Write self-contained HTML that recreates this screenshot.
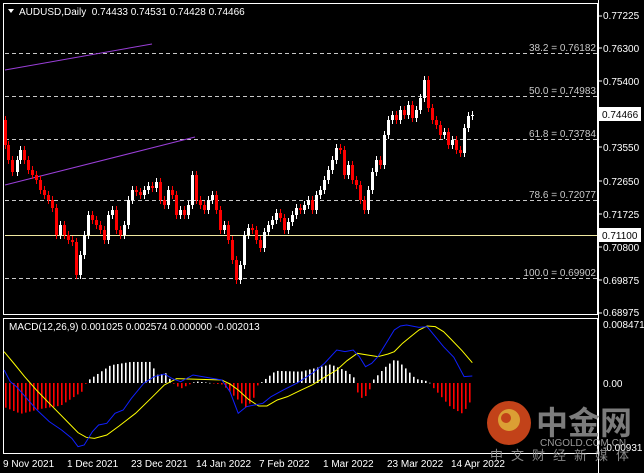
<!DOCTYPE html>
<html><head><meta charset="utf-8"><style>
html,body{margin:0;padding:0;background:#000;width:644px;height:473px;overflow:hidden}
svg{display:block}
text{font-family:"Liberation Sans",sans-serif;font-size:10px;fill:#fff}
</style></head><body>
<svg id="s" width="644" height="473" viewBox="0 0 644 473" xmlns="http://www.w3.org/2000/svg">
<rect width="644" height="473" fill="#000"/>
<rect x="3.5" y="3.5" width="594" height="311" fill="none" stroke="#fff"/>
<rect x="3.5" y="318.5" width="594" height="135" fill="none" stroke="#fff"/>
<line x1="598.5" y1="0" x2="598.5" y2="473" stroke="#fff"/>
<g stroke="#c8c8c8" stroke-dasharray="4,3" stroke-width="1">
<line x1="5" y1="53.5" x2="597" y2="53.5"/>
<line x1="5" y1="96.5" x2="597" y2="96.5"/>
<line x1="5" y1="139.5" x2="597" y2="139.5"/>
<line x1="5" y1="200.5" x2="597" y2="200.5"/>
<line x1="5" y1="278.5" x2="597" y2="278.5"/>
</g>
<g text-anchor="end">
<text x="596" y="51" style="fill:#c8c8c8">38.2 = 0.76182</text>
<text x="596" y="94" style="fill:#c8c8c8">50.0 = 0.74983</text>
<text x="596" y="137" style="fill:#c8c8c8">61.8 = 0.73784</text>
<text x="596" y="198" style="fill:#c8c8c8">78.6 = 0.72077</text>
<text x="596" y="276" style="fill:#c8c8c8">100.0 = 0.69902</text>
</g>
<line x1="5" y1="235.5" x2="597" y2="235.5" stroke="#f0e8a0"/>
<line x1="5" y1="70" x2="152" y2="44" stroke="#9a3fd8"/>
<line x1="5" y1="185" x2="195" y2="137" stroke="#9a3fd8"/>
<g id="candles"></g>
<g id="hist"></g>
<g transform="translate(0,300) scale(0.4107,0.3333)" fill="none">
<polyline vector-effect="non-scaling-stroke" stroke="#ffff00" stroke-width="1" points="10,155 35,192 60,230 90,272 120,310 160,360 190,398 210,412 230,415 260,405 290,378 330,340 370,292 400,255 430,236 540,240 560,252 580,270 605,298 630,318 650,318 675,300 700,290 730,272 760,255 790,232 820,210 845,182 870,160 895,165 920,170 945,162 960,155 980,130 1000,110 1020,90 1040,78 1060,80 1080,95 1100,120 1125,152 1150,188"/>
<polyline vector-effect="non-scaling-stroke" stroke="#1020ff" stroke-width="1" points="10,210 25,245 40,260 65,295 90,330 120,365 150,390 175,415 190,440 205,435 225,395 240,375 260,370 280,340 300,330 320,295 350,250 375,230 400,222 420,236 440,245 470,225 540,240 560,275 580,340 600,320 640,310 660,290 690,270 725,248 760,220 790,190 820,150 840,155 860,150 875,170 890,200 905,190 920,170 940,130 960,90 975,78 990,75 1020,82 1040,80 1060,110 1080,140 1105,172 1130,230 1150,228"/>
</g>
<polygon points="8,9 14,9 11,13" fill="#fff"/>
<text x="19" y="15">AUDUSD,Daily&#160; 0.74433 0.74531 0.74428 0.74466</text>
<text x="9" y="330">MACD(12,26,9) 0.001025 0.002574 0.000000 -0.002013</text>
<g>
<line x1="598" y1="16" x2="602" y2="16" stroke="#fff"/><text x="603" y="19">0.77225</text>
<line x1="598" y1="48" x2="602" y2="48" stroke="#fff"/><text x="603" y="52">0.76300</text>
<line x1="598" y1="81" x2="602" y2="81" stroke="#fff"/><text x="603" y="85">0.75400</text>
<line x1="598" y1="147" x2="602" y2="147" stroke="#fff"/><text x="603" y="151">0.73550</text>
<line x1="598" y1="181" x2="602" y2="181" stroke="#fff"/><text x="603" y="185">0.72650</text>
<line x1="598" y1="214" x2="602" y2="214" stroke="#fff"/><text x="603" y="218">0.71725</text>
<line x1="598" y1="247" x2="602" y2="247" stroke="#fff"/><text x="603" y="251">0.70800</text>
<line x1="598" y1="280" x2="602" y2="280" stroke="#fff"/><text x="603" y="284">0.69875</text>
<line x1="598" y1="313" x2="602" y2="313" stroke="#fff"/><text x="603" y="316">0.68975</text>
<rect x="599" y="107" width="42" height="14" fill="#fff"/><text x="602" y="118" style="fill:#000">0.74466</text>
<rect x="599" y="228" width="42" height="14" fill="#fff"/><text x="602" y="239" style="fill:#000">0.71100</text>
<text x="603" y="328">0.008471</text>
<text x="603" y="387">0.00</text>
<text x="603" y="451">-0.00931</text>
</g>
<g>
<text x="3" y="467">9 Nov 2021</text>
<text x="67" y="467">1 Dec 2021</text>
<text x="131" y="467">23 Dec 2021</text>
<text x="196" y="467">14 Jan 2022</text>
<text x="259" y="467">7 Feb 2022</text>
<text x="323" y="467">1 Mar 2022</text>
<text x="387" y="467">23 Mar 2022</text>
<text x="451" y="467">14 Apr 2022</text>
</g>
<g opacity="0.9">
<circle cx="509" cy="423" r="22" fill="#d84a1c"/>
<circle cx="509" cy="420" r="11" fill="#f3b13a"/>
<circle cx="506" cy="418" r="5" fill="#d84a1c"/>
<text x="536" y="434" style="font-family:'Noto Sans CJK SC',sans-serif;font-size:32px;font-weight:bold;fill:#8a8a8a">中金网</text>
<text x="540" y="446" style="font-size:10px;fill:#aaa">CNGOLD.COM.CN</text>
<text x="490" y="460" style="font-family:'Noto Sans CJK SC',sans-serif;font-size:13px;fill:#999;letter-spacing:8px">中文财经新媒体</text>
</g>
</svg>
<script>
var ys=[[5,120,145],[8,145,160],[12,160,172],[17,172,160],[20,160,150],[24,150,160],[28,160,170],[32,170,175],[36,175,180],[40,180,190],[44,190,195],[48,195,200],[52,200,208],[56,208,235],[60,235,225],[64,225,235],[68,235,240],[72,240,242],[76,242,275],[80,275,255],[84,255,235],[88,235,215],[92,215,220],[96,220,225],[100,225,230],[104,230,240],[108,240,215],[112,215,210],[116,210,230],[120,230,235],[124,235,225],[128,225,200],[132,200,190],[136,190,192],[140,192,195],[144,195,190],[148,190,186],[152,186,188],[156,188,182],[160,182,200],[164,200,205],[168,205,190],[172,190,195],[176,195,215],[180,215,210],[184,210,215],[188,215,205],[192,205,175],[196,175,200],[200,200,205],[204,205,210],[208,210,200],[212,200,195],[216,195,210],[220,210,230],[224,230,225],[228,225,240],[232,240,260],[236,260,280],[240,280,265],[244,265,235],[248,235,228],[252,228,230],[256,230,240],[260,240,248],[264,248,232],[268,232,225],[272,225,220],[276,220,213],[280,213,218],[284,218,230],[288,230,222],[292,222,215],[296,215,208],[300,208,210],[304,210,205],[308,205,200],[312,200,210],[316,210,195],[320,195,190],[324,190,180],[328,180,170],[332,170,160],[336,160,148],[340,148,150],[344,150,175],[348,175,165],[352,165,180],[356,180,185],[360,185,200],[364,200,210],[368,210,190],[372,190,172],[376,172,160],[380,160,165],[384,165,135],[388,135,120],[392,120,115],[396,115,120],[400,120,110],[404,110,115],[408,115,105],[412,105,118],[416,118,110],[420,110,98],[424,98,80],[428,80,108],[432,108,120],[436,120,125],[440,125,135],[444,135,132],[448,132,145],[452,145,140],[456,140,150],[460,150,153],[464,153,128],[468,128,116],[472,116,115]];
var h='';
ys.forEach(function(c){var x=c[0],o=c[1],cl=c[2],t=Math.min(o,cl),b=Math.max(o,cl);var col=cl<=o?'#fff':'#ff0000';
h+='<rect x="'+x+'" y="'+(t-4)+'" width="1" height="'+(b-t+8)+'" fill="'+col+'"/>';
h+='<rect x="'+(x-1)+'" y="'+t+'" width="3" height="'+Math.max(1,b-t)+'" fill="'+col+'"/>';});
document.getElementById('candles').innerHTML=h;
var kp=[[4,-30],[20,-38],[40,-32],[60,-28],[82,-10],[86,2],[110,22],[130,26],[150,26],[156,10],[165,12],[172,0],[180,-7],[195,2],[210,0],[222,-2],[230,-12],[245,-30],[252,-22],[257,-3],[265,5],[275,15],[300,14],[330,23],[345,15],[355,5],[358,-20],[367,-15],[372,3],[385,20],[395,30],[405,18],[415,5],[428,2],[432,-5],[450,-30],[462,-38],[472,-18]];
function v(x){for(var i=0;i<kp.length-1;i++){if(x>=kp[i][0]&&x<=kp[i+1][0]){var f=(x-kp[i][0])/(kp[i+1][0]-kp[i][0]);return kp[i][1]+f*(kp[i+1][1]-kp[i][1]);}}return 0;}
var hh='';for(var x=5;x<=472;x+=4){var val=v(x)*0.81;var col=val>=0?'#fff':'#ff0000';var t=val>=0?383-val:383;hh+='<rect x="'+x+'" y="'+t+'" width="1.6" height="'+Math.max(0.5,Math.abs(val))+'" fill="'+col+'"/>';}
document.getElementById('hist').innerHTML=hh;
</script>
</body></html>
